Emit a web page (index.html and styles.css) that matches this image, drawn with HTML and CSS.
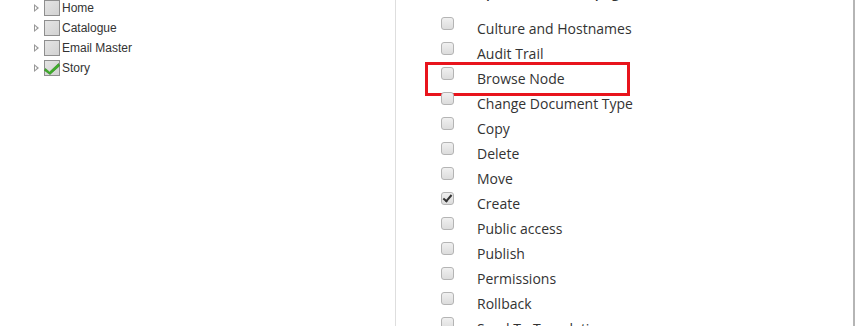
FILE: index.html
```html
<!DOCTYPE html>
<html lang="en">
<head>
    <meta charset="UTF-8">
    <title>Permissions</title>
    <link rel="stylesheet" href="styles.css">
</head>
<body>
    <div class="page">
        <div class="tree-panel">
            <ul class="tree">
                <li><span class="arrow"></span><span class="tree-check"></span>Home</li>
                <li><span class="arrow"></span><span class="tree-check"></span>Catalogue</li>
                <li><span class="arrow"></span><span class="tree-check"></span>Email Master</li>
                <li>
                    <span class="arrow"></span>
                    <span class="tree-check checked">
                        <svg width="16" height="16" viewBox="0 0 16 16">
                            <path d="M1.5 8.5 L5.5 12 L14.5 3.5 L15.5 6 L6 14.5 L0.5 10.5 Z" fill="#3fae2a" stroke="#2b8a1c" stroke-width="0.6"/>
                        </svg>
                    </span>Story
                </li>
            </ul>
        </div>

        <div class="perm-panel">
            <p class="perm-title">Set permissions for page</p>
            <ul class="perm-list">
                <li><input type="checkbox"><span>Culture and Hostnames</span></li>
                <li><input type="checkbox"><span>Audit Trail</span></li>
                <li class="highlight"><input type="checkbox"><span>Browse Node</span></li>
                <li><input type="checkbox"><span>Change Document Type</span></li>
                <li><input type="checkbox"><span>Copy</span></li>
                <li><input type="checkbox"><span>Delete</span></li>
                <li><input type="checkbox"><span>Move</span></li>
                <li><input type="checkbox" checked><span>Create</span></li>
                <li><input type="checkbox"><span>Public access</span></li>
                <li><input type="checkbox"><span>Publish</span></li>
                <li><input type="checkbox"><span>Permissions</span></li>
                <li><input type="checkbox"><span>Rollback</span></li>
                <li><input type="checkbox"><span>Send To Translation</span></li>
            </ul>
        </div>
    </div>
</body>
</html>
```

FILE: styles.css
```css
* {
    margin: 0;
    padding: 0;
    box-sizing: border-box;
}

body {
    background: #fff;
    overflow: hidden;
}

.page {
    display: flex;
    height: 326px;
    border-right: 2px solid #b5b5b5;
    margin-right: 1px;
}

/* arbre de gauche */
.tree-panel {
    width: 396px;
    border-right: 1px solid #dedede;
    padding-left: 32px;
}

.tree {
    list-style: none;
    font-family: "Liberation Sans", Arial, sans-serif;
    font-size: 12px;
    color: #333;
}

.tree li {
    display: flex;
    align-items: center;
    height: 20px;
    margin-top: -3px;
    margin-bottom: 3px;
}

.tree li:first-child {
    margin-top: -2px;
}

.arrow {
    width: 0;
    height: 0;
    margin: 0 5px 0 2px;
    position: relative;
    border-top: 4px solid transparent;
    border-bottom: 4px solid transparent;
    border-left: 5px solid #999;
}

.arrow::after {
    content: '';
    position: absolute;
    left: -4px;
    top: -2px;
    border-top: 2px solid transparent;
    border-bottom: 2px solid transparent;
    border-left: 2px solid #fff;
}

.tree-check {
    width: 16px;
    height: 16px;
    margin-right: 2px;
    border: 1px solid #8f8f8f;
    background: linear-gradient(135deg, #e4e4e4 0%, #d2d2d2 100%);
    position: relative;
}

.tree-check svg {
    position: absolute;
    left: -1px;
    top: -1px;
}

/* liste des permissions */
.perm-panel {
    flex: 1;
    padding-left: 45px;
    position: relative;
    font-family: "Open Sans", sans-serif;
    font-size: 14px;
    color: #333;
}

.perm-title {
    height: 20px;
    line-height: 20px;
    margin-top: -17px;
    margin-bottom: 14px;
    padding-left: 20px;
    font-weight: 600;
}

.perm-list {
    list-style: none;
}

.perm-list li {
    display: flex;
    align-items: flex-start;
    height: 25px;
}

.perm-list input {
    appearance: none;
    -webkit-appearance: none;
    width: 13px;
    height: 13px;
    margin: 0 23px 0 0;
    border: 1px solid #b4b4b4;
    border-radius: 3px;
    background: linear-gradient(#f0f0f0, #dcdcdc);
    position: relative;
    flex-shrink: 0;
}

.perm-list input:checked::after {
    content: '';
    position: absolute;
    left: 3px;
    top: 0;
    width: 3px;
    height: 7px;
    border: solid #333;
    border-width: 0 2px 2px 0;
    transform: rotate(40deg);
}

.perm-list span {
    line-height: 20px;
    margin-top: 2px;
}

.highlight {
    position: relative;
}

.highlight::before {
    content: '';
    box-sizing: border-box;
    position: absolute;
    left: -16px;
    top: -5px;
    width: 205px;
    height: 34px;
    border: 3px solid #e8141c;
}
```
